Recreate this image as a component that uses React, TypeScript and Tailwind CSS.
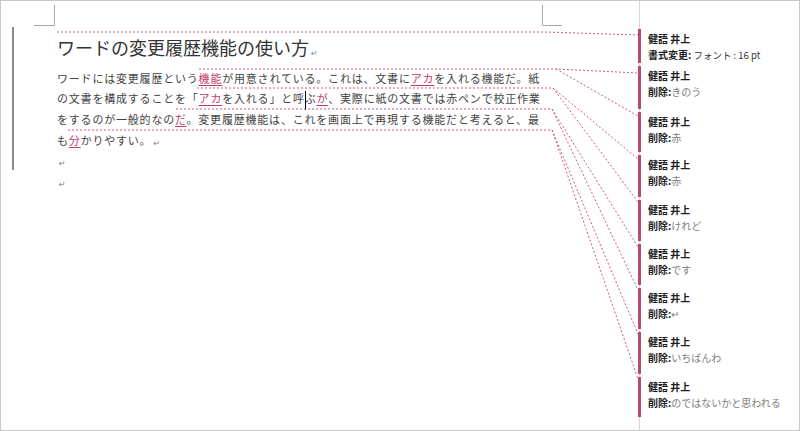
import React from "react";

type Seg = { t: string; ins?: boolean; cursor?: boolean };

const rows: Seg[][] = [
  [
    { t: "ワードには変更履歴という" },
    { t: "機能", ins: true },
    { t: "が用意されている。これは、文書に" },
    { t: "アカ", ins: true },
    { t: "を入れる機能だ。紙" },
  ],
  [
    { t: "の文書を構成することを「" },
    { t: "アカ", ins: true },
    { t: "を入れる」と呼" },
    { t: "", cursor: true },
    { t: "ぶ" },
    { t: "が", ins: true },
    { t: "、実際に紙の文書では赤ペンで校正作業" },
  ],
  [
    { t: "をするのが一般的なの" },
    { t: "だ", ins: true },
    { t: "。変更履歴機能は、これを画面上で再現する機能だと考えると、最" },
  ],
  [{ t: "も" }, { t: "分", ins: true }, { t: "かりやすい。" }],
];

type Balloon = { h: string; label: string; text: string; fmt?: boolean };

const balloons: Balloon[] = [
  { h: "h-[34px]", label: "書式変更:", text: " フォント : 16 pt", fmt: true },
  { h: "h-[43px]", label: "削除:", text: "きのう" },
  { h: "h-[40px]", label: "削除:", text: "赤" },
  { h: "h-[42px]", label: "削除:", text: "赤" },
  { h: "h-[41px]", label: "削除:", text: "けれど" },
  { h: "h-[41px]", label: "削除:", text: "です" },
  { h: "h-[41px]", label: "削除:", text: "↵" },
  { h: "h-[42px]", label: "削除:", text: "いちばんわ" },
  { h: "h-[40px]", label: "削除:", text: "のではないかと思われる" },
];

function Mark() {
  return (
    <span className="ml-[2px] inline-block font-['DejaVu_Sans',sans-serif] text-[8px] font-normal leading-none tracking-normal text-[#7a7a7a] align-[-1px]">
      ↵
    </span>
  );
}

function Overlay() {
  const c = "#cf5a83";
  const dash = "2 2";
  const lines = [
    "M57,32 H545 L638,35",
    "M199,69 H556 L638,73",
    "M556,69 L638,116",
    "M197,88 H553 L638,159",
    "M553,88 L638,202",
    "M176,109 H552 L638,247",
    "M552,109 L638,290",
    "M68,130 H552 L638,334",
    "M552,130 L638,379",
  ];
  return (
    <svg
      className="pointer-events-none absolute -left-px -top-px"
      width="800"
      height="431"
      viewBox="0 0 800 431"
    >
      <path d="M54.5,5 V25.5 H34" fill="none" stroke="#a8a8a8" strokeWidth="1" />
      <path d="M542.5,5 V25.5 H562" fill="none" stroke="#a8a8a8" strokeWidth="1" />
      <rect x="12" y="27" width="2" height="143" fill="#8c8c8c" />
      {lines.map((d, i) => (
        <path key={i} d={d} fill="none" stroke={c} strokeWidth="1" strokeDasharray={dash} />
      ))}
    </svg>
  );
}

export default function App() {
  return (
    <div className="relative flex h-[431px] w-[800px] overflow-hidden border border-[#c8c8c8] bg-white font-['Noto_Sans_CJK_JP',sans-serif]">
      <div className="w-[638px] shrink-0 pl-[56px] pt-[34px]">
        <div className="h-[24px] whitespace-nowrap text-[18px] font-normal leading-[24px] text-[#333333]">
          ワードの変更履歴機能の使い方
          <Mark />
        </div>
        <div className="mt-[8.5px] text-[11px] leading-[20.7px] tracking-[0.8px] text-[#444444]">
          {rows.map((row, ri) => (
            <div key={ri} className="h-[20.7px] whitespace-nowrap">
              {row.map((s, si) =>
                s.cursor ? (
                  <span key={si} className="-mr-px inline-block h-[19px] w-px bg-black align-middle" />
                ) : s.ins ? (
                  <span
                    key={si}
                    className="text-[#c03c6c] underline decoration-[#c03c6c] decoration-1 underline-offset-[2px]"
                  >
                    {s.t}
                  </span>
                ) : (
                  <span key={si}>{s.t}</span>
                )
              )}
              {ri === 3 && <Mark />}
            </div>
          ))}
          <div className="h-[20.7px]">
            <Mark />
          </div>
          <div className="h-[20.7px]">
            <Mark />
          </div>
        </div>
      </div>
      <div className="flex flex-1 flex-col gap-[3px] border-l border-[#d4d4d4] pt-[28px]">
        {balloons.map((b, i) => (
          <div key={i} className={`-ml-[2px] ${b.h} border-l-[3px] border-[#b94a6e] pl-[7px] pt-[3px]`}>
            <div className="whitespace-nowrap text-[10px] font-bold leading-[14px] text-[#1e1e1e]">
              健語 井上
            </div>
            <div className="mt-[2px] whitespace-nowrap text-[10px] leading-[14px]">
              <span className="font-bold text-[#1e1e1e]">{b.label}</span>
              {b.fmt ? (
                <span className="text-[9.5px] text-[#333]">{b.text}</span>
              ) : (
                <span className="text-[#7c7c7c]">{b.text}</span>
              )}
            </div>
          </div>
        ))}
      </div>
      <Overlay />
    </div>
  );
}
